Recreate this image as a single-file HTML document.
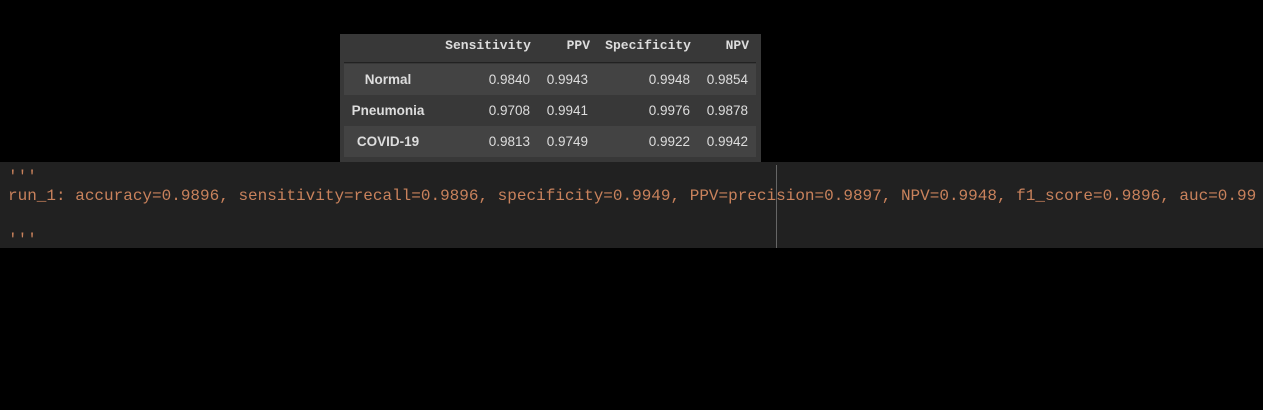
<!DOCTYPE html>
<html><head><style>
html,body{margin:0;padding:0;background:#000;width:1263px;height:410px;overflow:hidden;position:relative}
.tbl{position:absolute;left:340px;top:34px;width:421px;height:128px;background:#383838}
.hdr{position:absolute;top:0;height:28px;left:0;right:0;font:bold 13px "Liberation Mono",monospace;color:#ddd}
.sep{position:absolute;top:28px;left:4px;width:412px;height:1px;background:#222}
.row{position:absolute;left:4px;width:412px;height:31px;font:13.5px "Liberation Sans",sans-serif;color:#ddd}
.c{position:absolute;line-height:31px;text-align:right;white-space:nowrap}
.hdr .c{line-height:24px}
.lbl{position:absolute;line-height:31px;font-weight:bold;text-align:center;width:88px;left:0}
.code{position:absolute;left:0;top:162px;width:1263px;height:86px;background:#212121;font:16px "Liberation Mono",monospace;color:#c9825c;white-space:pre}
.code div{position:absolute;left:8px}
.vl{position:absolute;left:776px;top:3px;width:1px;height:83px;background:#666}
</style></head><body>
<div class="tbl">
 <div class="hdr">
  <span class="c" style="right:230px">Sensitivity</span>
  <span class="c" style="right:171px">PPV</span>
  <span class="c" style="right:70px">Specificity</span>
  <span class="c" style="right:12px">NPV</span>
 </div>
 <div class="sep"></div>
 <div class="row" style="top:30px;background:#434343"><span class="lbl">Normal</span><span class="c" style="right:226px">0.9840</span><span class="c" style="right:168px">0.9943</span><span class="c" style="right:66px">0.9948</span><span class="c" style="right:8px">0.9854</span></div>
 <div class="row" style="top:61px;background:#383838"><span class="lbl">Pneumonia</span><span class="c" style="right:226px">0.9708</span><span class="c" style="right:168px">0.9941</span><span class="c" style="right:66px">0.9976</span><span class="c" style="right:8px">0.9878</span></div>
 <div class="row" style="top:92px;background:#434343"><span class="lbl">COVID-19</span><span class="c" style="right:226px">0.9813</span><span class="c" style="right:168px">0.9749</span><span class="c" style="right:66px">0.9922</span><span class="c" style="right:8px">0.9942</span></div>
</div>
<div class="code">
 <div style="top:6px">'''</div>
 <div style="top:25px">run_1: accuracy=0.9896, sensitivity=recall=0.9896, specificity=0.9949, PPV=precision=0.9897, NPV=0.9948, f1_score=0.9896, auc=0.99</div>
 <div style="top:69px">'''</div>
 <span class="vl"></span>
</div>
</body></html>
